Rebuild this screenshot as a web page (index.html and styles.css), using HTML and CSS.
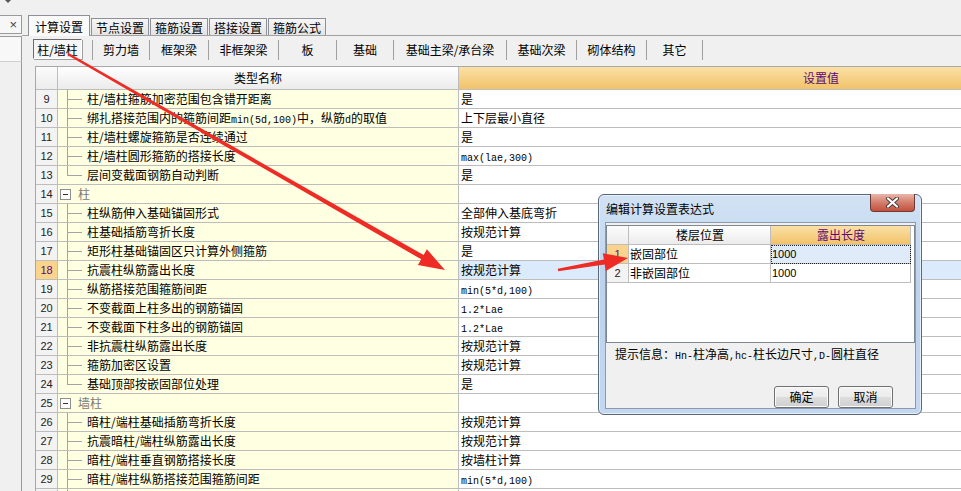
FILE: index.html
```html
<!DOCTYPE html>
<html lang="zh-CN">
<head>
<meta charset="utf-8">
<title>计算设置</title>
<link rel="stylesheet" href="styles.css">
</head>
<body>
<div class="app">
  <aside class="side">
    <div class="side-top"><span class="caret"></span></div>
    <div class="side-close">×</div>
    <div class="side-box"></div>
    <div class="side-rest"></div>
  </aside>
  <main class="main">
    <div class="tabs">
      <div class="tab active">计算设置</div>
      <div class="tab">节点设置</div>
      <div class="tab">箍筋设置</div>
      <div class="tab">搭接设置</div>
      <div class="tab">箍筋公式</div>
    </div>
    <div class="pane">
      <div class="subtabs">
        <div class="sub first"><span class="pressed">柱/墙柱</span></div>
        <div class="sub w57">剪力墙</div>
        <div class="sub w59">框架梁</div>
        <div class="sub w70">非框架梁</div>
        <div class="sub w58">板</div>
        <div class="sub w57">基础</div>
        <div class="sub w113">基础主梁/承台梁</div>
        <div class="sub w70">基础次梁</div>
        <div class="sub w70">砌体结构</div>
        <div class="sub w57 last">其它</div>
      </div>
      <div class="grid">
        <div class="row head">
          <div class="num"></div>
          <div class="name">类型名称</div>
          <div class="val">设置值</div>
        </div>
        <div class="row"><div class="num">9</div><div class="name child">柱/墙柱箍筋加密范围包含错开距离</div><div class="val">是</div></div>
        <div class="row"><div class="num">10</div><div class="name child">绑扎搭接范围内的箍筋间距<span class="m">min(5d,100)</span>中，纵筋<span class="m">d</span>的取值</div><div class="val">上下层最小直径</div></div>
        <div class="row"><div class="num">11</div><div class="name child">柱/墙柱螺旋箍筋是否连续通过</div><div class="val">是</div></div>
        <div class="row"><div class="num">12</div><div class="name child">柱/墙柱圆形箍筋的搭接长度</div><div class="val"><span class="m">max(lae,300)</span></div></div>
        <div class="row"><div class="num">13</div><div class="name child end">层间变截面钢筋自动判断</div><div class="val">是</div></div>
        <div class="row"><div class="num">14</div><div class="name group"><span class="box"></span>柱</div><div class="val"></div></div>
        <div class="row"><div class="num">15</div><div class="name child">柱纵筋伸入基础锚固形式</div><div class="val">全部伸入基底弯折</div></div>
        <div class="row"><div class="num">16</div><div class="name child">柱基础插筋弯折长度</div><div class="val">按规范计算</div></div>
        <div class="row"><div class="num">17</div><div class="name child">矩形柱基础锚固区只计算外侧箍筋</div><div class="val">是</div></div>
        <div class="row sel"><div class="num">18</div><div class="name child">抗震柱纵筋露出长度</div><div class="val">按规范计算</div></div>
        <div class="row"><div class="num">19</div><div class="name child">纵筋搭接范围箍筋间距</div><div class="val"><span class="m">min(5*d,100)</span></div></div>
        <div class="row"><div class="num">20</div><div class="name child">不变截面上柱多出的钢筋锚固</div><div class="val"><span class="m">1.2*Lae</span></div></div>
        <div class="row"><div class="num">21</div><div class="name child">不变截面下柱多出的钢筋锚固</div><div class="val"><span class="m">1.2*Lae</span></div></div>
        <div class="row"><div class="num">22</div><div class="name child">非抗震柱纵筋露出长度</div><div class="val">按规范计算</div></div>
        <div class="row"><div class="num">23</div><div class="name child">箍筋加密区设置</div><div class="val">按规范计算</div></div>
        <div class="row"><div class="num">24</div><div class="name child end">基础顶部按嵌固部位处理</div><div class="val">是</div></div>
        <div class="row"><div class="num">25</div><div class="name group"><span class="box"></span>墙柱</div><div class="val"></div></div>
        <div class="row"><div class="num">26</div><div class="name child">暗柱/端柱基础插筋弯折长度</div><div class="val">按规范计算</div></div>
        <div class="row"><div class="num">27</div><div class="name child">抗震暗柱/端柱纵筋露出长度</div><div class="val">按规范计算</div></div>
        <div class="row"><div class="num">28</div><div class="name child">暗柱/端柱垂直钢筋搭接长度</div><div class="val">按墙柱计算</div></div>
        <div class="row"><div class="num">29</div><div class="name child">暗柱/端柱纵筋搭接范围箍筋间距</div><div class="val"><span class="m">min(5*d,100)</span></div></div>
        <div class="row"><div class="num"></div><div class="name child"></div><div class="val"></div></div>
      </div>
    </div>
  </main>
</div>

<div class="dlg">
  <div class="dlg-title">
    <span class="dlg-caption">编辑计算设置表达式</span>
    <span class="dlg-x"><svg width="17" height="11" viewBox="0 0 17 11"><path d="M4 1.5 L13 9.5 M13 1.5 L4 9.5" stroke="#4a3a3a" stroke-width="4" stroke-linecap="round"/><path d="M4 1.5 L13 9.5 M13 1.5 L4 9.5" stroke="#ffffff" stroke-width="2.2" stroke-linecap="round"/></svg></span>
  </div>
  <div class="dlg-client">
    <div class="dgrid">
      <div class="drow dhead"><div class="dnum"></div><div class="dc1">楼层位置</div><div class="dc2">露出长度</div></div>
      <div class="drow"><div class="dnum dsel">1</div><div class="dc1">嵌固部位</div><div class="dc2 dfocus">1000</div></div>
      <div class="drow"><div class="dnum">2</div><div class="dc1">非嵌固部位</div><div class="dc2">1000</div></div>
    </div>
    <div class="hint">提示信息：<span class="m">Hn-</span>柱净高<span class="m">,hc-</span>柱长边尺寸<span class="m">,D-</span>圆柱直径</div>
    <div class="btns"><span class="btn">确定</span><span class="btn">取消</span></div>
  </div>
</div>

<svg class="arrows" width="961" height="491" viewBox="0 0 961 491">
  <polygon fill="#ee2b24" points="68.6,53 423.6,254.9 426.9,249.3 445,270 417.9,264.9 421.2,259.3 67.4,55"/>
  <polygon fill="#ee2b24" points="557.8,268.8 603.9,259.6 602.8,253.2 628,258 605.8,271 604.7,264.6 558.2,271.2"/>
</svg>
</body>
</html>
```

FILE: styles.css
```css
* { box-sizing: border-box; margin: 0; padding: 0; }
html, body { width: 961px; height: 491px; overflow: hidden; }
body {
  background: #f0f0f0;
  font-family: "Noto Sans CJK SC", "Liberation Sans", sans-serif;
  font-size: 12px;
  color: #000;
  position: relative;
}
.m { font-family: "Liberation Mono", monospace; font-size: 10px; }

.app { display: flex; height: 491px; }

/* left strip */
.side { width: 22px; flex: none; display: flex; flex-direction: column; }
.side-top { height: 15px; padding-left: 5px; }
.caret {
  display: block; width: 0; height: 0;
  border-left: 3px solid transparent; border-right: 3px solid transparent;
  border-top: 3px solid #555;
}
.side-close {
  height: 19px;
  border-top: 1px solid #9a9a9a; border-right: 1px solid #9a9a9a; border-bottom: 1px solid #9a9a9a;
  background: #f7f7f7;
  text-align: right; padding-right: 4px;
  line-height: 17px;
  font-family: "Liberation Sans", sans-serif; font-size: 13px; color: #444;
}
.side-box {
  height: 26px; margin-top: 2px;
  border-top: 1px solid #9a9a9a; border-right: 1px solid #9a9a9a; border-bottom: 1px solid #d0d0d0;
  background: #f8f8f8;
}
.side-rest { flex: 1; border-right: 1px solid #9a9a9a; }

/* main */
.main { flex: 1; min-width: 0; overflow: hidden; }
.tabs { display: flex; align-items: flex-end; height: 35px; padding-left: 6px; }
.tab {
  width: 58px; height: 17px; margin-left: 1px;
  border: 1px solid #8d9096; border-bottom: none;
  background: linear-gradient(#f6f6f6, #e4e4e4);
  text-align: center; line-height: 17px; white-space: nowrap;
}
.tab.active {
  width: 62px; height: 21px; margin-left: 0; margin-bottom: -1px;
  background: #fafafa; line-height: 21px;
  position: relative; z-index: 1;
}
.pane { border-top: 1px solid #a0a0a0; }
.subtabs { display: flex; height: 30px; padding: 4px 0 0 11px; align-items: flex-start; }
.sub { height: 20px; line-height: 19px; text-align: center; white-space: nowrap; border-left: 1px solid #a0a0a0; }
.sub.first { border-left: none; width: 59px; }
.pressed {
  display: block; width: 49px; height: 20px; margin-top: -1px;
  border-top: 1px solid #6b6b6b; border-left: 1px solid #6b6b6b;
  border-right: 1px solid #ffffff; border-bottom: 1px solid #ffffff;
  box-shadow: 1px 1px 0 #a0a0a0;
  background: #f6f6f6; line-height: 19px;
}
.w57 { width: 57px; } .w58 { width: 58px; } .w59 { width: 59px; }
.w70 { width: 70px; } .w113 { width: 113px; }
.sub.last { border-right: 1px solid #a0a0a0; }

/* grid */
.grid {
  margin-left: 13px; width: 1152px;
  border-left: 1px solid #a8a8a8; border-top: 1px solid #a8a8a8;
}
.row { display: grid; grid-template-columns: 22px 401px 1fr; height: 19px; }
.row > div { border-bottom: 1px solid #bdbdbd; line-height: 18px; white-space: nowrap; overflow: hidden; }
.num {
  border-right: 1px solid #bdbdbd; background: #f3f3f3; text-align: center;
  font-family: "Liberation Sans", sans-serif; font-size: 11px; color: #222;
}
.name { border-right: 1px solid #bdbdbd; background: #ffffe1; }
.val { background: #fff; padding-left: 2px; }
.row.head { height: 23px; }
.row.head > div { line-height: 22px; font-size: 12px; }
.row.head .num { background: linear-gradient(#fbfbfb, #ececec); }
.row.head .name { background: linear-gradient(#ffffff, #ebebeb); text-align: center; }
.row.head .val {
  background: linear-gradient(#fbe0a6, #f1c36a); text-align: center; color: #5c0a78;
  padding-left: 0; padding-right: 4px;
}
.name.child {
  padding-left: 29px;
  background:
    linear-gradient(#a3a3a3, #a3a3a3) 9px 0 / 1px 100% no-repeat,
    linear-gradient(#a3a3a3, #a3a3a3) 9px 9px / 15px 1px no-repeat,
    #ffffe1;
}
.name.child.end {
  background:
    linear-gradient(#a3a3a3, #a3a3a3) 9px 0 / 1px 10px no-repeat,
    linear-gradient(#a3a3a3, #a3a3a3) 9px 9px / 15px 1px no-repeat,
    #ffffe1;
}
.name.group { padding-left: 2px; color: #7a7a7a; display: flex; align-items: center; }
.box {
  width: 11px; height: 11px; margin-right: 7px; flex: none;
  border: 1px solid #8e8e8e;
  background: linear-gradient(#333, #333) center / 5px 1px no-repeat, #fdfdfd;
}
.row.sel .num { background: #fad38c; color: #5c0a78; }
.row.sel .val { background: #dcebfc; }

/* dialog */
.dlg {
  position: absolute; left: 598px; top: 194px;
  width: 324px; height: 221px;
  border: 1px solid #58677a; border-radius: 6px;
  background: linear-gradient(#d2e2f4, #bcd3ee 40%, #c3d8f0);
  box-shadow: inset 0 0 0 1px #e6effa;
  display: flex; flex-direction: column;
  z-index: 5;
}
.dlg-title { height: 27px; display: flex; justify-content: space-between; align-items: flex-start; padding-left: 7px; padding-right: 6px; }
.dlg-caption { line-height: 27px; color: #000; }
.dlg-x {
  width: 45px; height: 18px; margin-top: -1px;
  border: 1px solid #6b3a33; border-top: none; border-radius: 0 0 4px 4px;
  background: linear-gradient(#e9b6aa, #d47d6c 50%, #c5503c);
  display: flex; align-items: center; justify-content: center;
}
.dlg-client {
  height: 187px; margin: 0 5px 0 6px;
  border: 1px solid #8a9bb0;
  background: #f0f0f0;
}
.dgrid {
  margin-top: 2px; height: 118px;
  border: 1px solid #7f8790;
  background: #fff;
}
.drow { display: grid; grid-template-columns: 22px 142px 140px; height: 19px; }
.drow > div { border-bottom: 1px solid #bdbdbd; border-right: 1px solid #bdbdbd; line-height: 18px; white-space: nowrap; }
.dnum { text-align: center; background: #f3f3f3; font-family: "Liberation Sans", sans-serif; font-size: 11px; color: #222; }
.dc1 { padding-left: 1px; }
.dc2 { padding-left: 1px; font-family: "Liberation Sans", sans-serif; font-size: 11px; }
.dhead > div { text-align: center; font-family: "Noto Sans CJK SC", sans-serif; font-size: 12px; }
.dhead .dnum { background: linear-gradient(#fbfbfb, #ececec); }
.dhead .dc1 { background: linear-gradient(#ffffff, #ebebeb); }
.dhead .dc2 { background: linear-gradient(#fbe0a6, #f1c36a); color: #5c0a78; }
.dnum.dsel { background: #fad38c; color: #5c0a78; }
.dc2.dfocus { background: #dfebf9; outline: 1px dotted #222; outline-offset: -1px; }
.hint { margin-top: 2px; padding-left: 9px; line-height: 18px; white-space: nowrap; }
.btns { display: flex; justify-content: flex-end; gap: 9px; margin-top: 20px; padding-right: 22px; }
.btn {
  width: 55px; height: 22px;
  border: 1px solid #707070; border-radius: 3px;
  background: linear-gradient(#f3f3f3, #ececec 48%, #dddddd 52%, #cfcfcf);
  box-shadow: inset 0 0 0 1px #fbfbfb;
  text-align: center; line-height: 20px;
}

.arrows { position: absolute; left: 0; top: 0; z-index: 10; pointer-events: none; }
```
